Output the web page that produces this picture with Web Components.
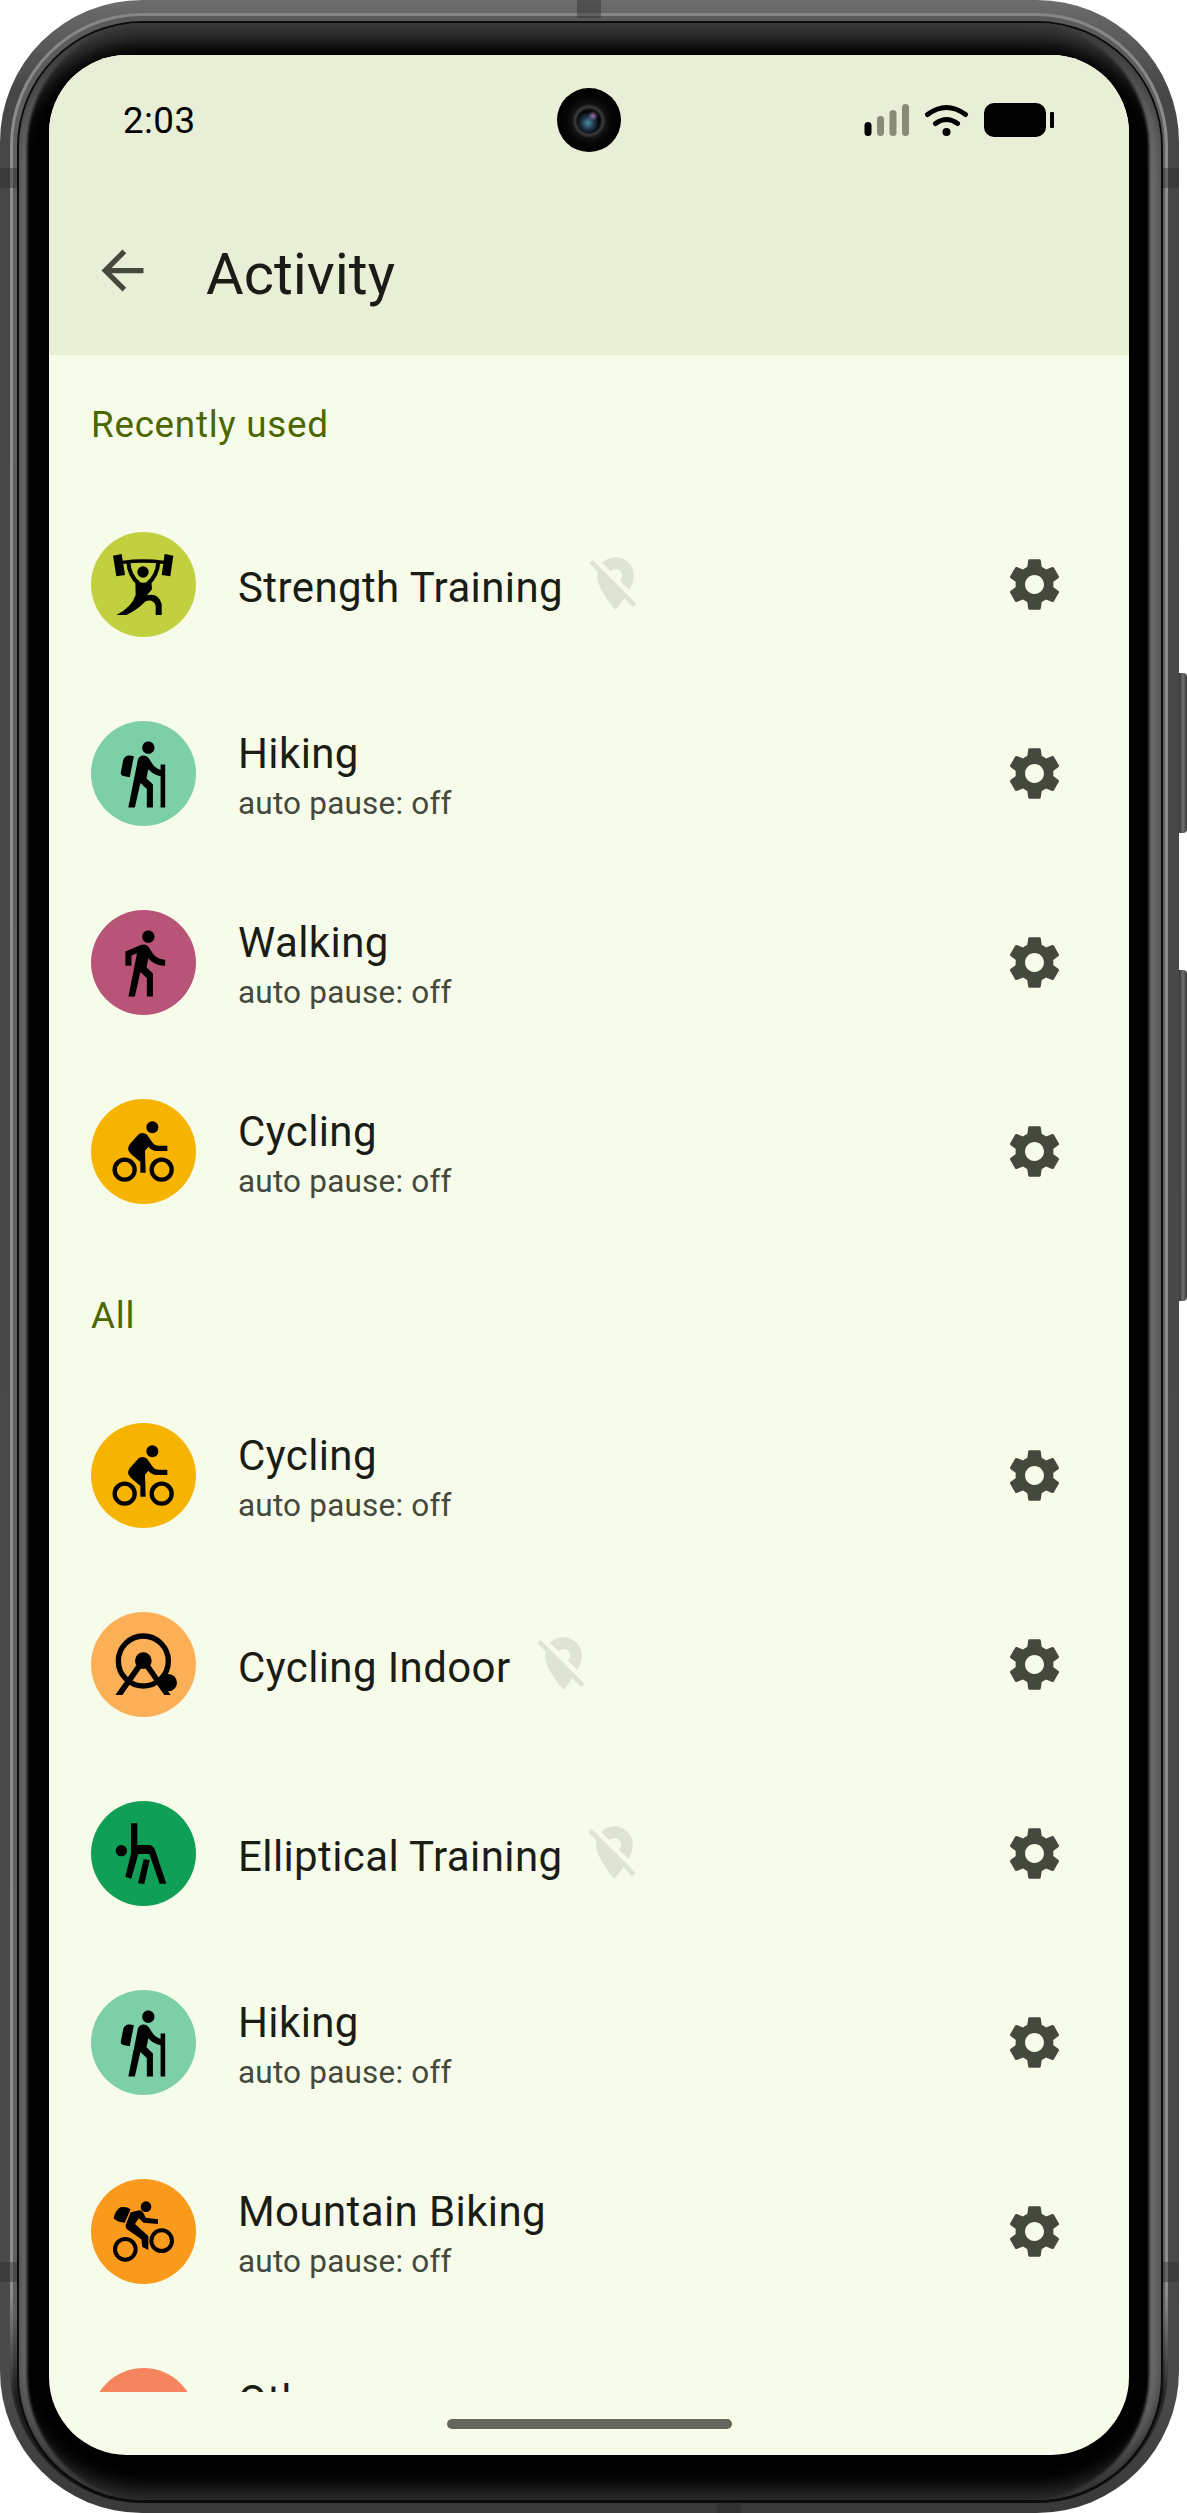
<!DOCTYPE html>
<html>
<head>
<meta charset="utf-8">
<title>Activity</title>
<style>
  html, body { margin: 0; padding: 0; background: #fff; }
  body { font-family: Roboto, "Liberation Sans", sans-serif; }
</style>
</head>
<body>
<phone-frame>
  <status-bar>2:03</status-bar>
  <app-bar>Activity</app-bar>
  <activity-list>
    <section-label>Recently used</section-label>
    <activity-row icon="strength" color="#c2cf3e" nopause>Strength Training</activity-row>
    <activity-row icon="hike" color="#7dcfa8">Hiking<span slot="sub">auto pause: off</span></activity-row>
    <activity-row icon="walk" color="#b85478">Walking<span slot="sub">auto pause: off</span></activity-row>
    <activity-row icon="bike" color="#f6b400">Cycling<span slot="sub">auto pause: off</span></activity-row>
    <section-label>All</section-label>
    <activity-row icon="bike" color="#f6b400">Cycling<span slot="sub">auto pause: off</span></activity-row>
    <activity-row icon="indoor" color="#fbb057" nopause>Cycling Indoor</activity-row>
    <activity-row icon="elliptical" color="#109f57" nopause>Elliptical Training</activity-row>
    <activity-row icon="hike" color="#7dcfa8">Hiking<span slot="sub">auto pause: off</span></activity-row>
    <activity-row icon="mtb" color="#f99a1c">Mountain Biking<span slot="sub">auto pause: off</span></activity-row>
    <activity-row icon="other" color="#f5845f">Other<span slot="sub">&nbsp;</span></activity-row>
  </activity-list>
  <nav-pill></nav-pill>
</phone-frame>

<script>
// material paths are on a 24 unit grid, the others are traced from a 3x crop of the 105px circle
const GEAR = 'M19.14 12.94c.04-.3.06-.61.06-.94 0-.32-.02-.64-.07-.94l2.03-1.58c.18-.14.23-.41.12-.61l-1.92-3.32c-.12-.22-.37-.29-.59-.22l-2.39.96c-.5-.38-1.03-.7-1.62-.94l-.36-2.54c-.04-.24-.24-.41-.48-.41h-3.84c-.24 0-.43.17-.47.41l-.36 2.54c-.59.24-1.13.57-1.62.94l-2.39-.96c-.22-.08-.47 0-.59.22L2.74 8.87c-.12.21-.08.47.12.61l2.03 1.58c-.05.3-.09.63-.09.94s.02.64.07.94l-2.03 1.58c-.18.14-.23.41-.12.61l1.92 3.32c.12.22.37.29.59.22l2.39-.96c.5.38 1.03.7 1.62.94l.36 2.54c.05.24.24.41.48.41h3.84c.24 0 .44-.17.47-.41l.36-2.54c.59-.24 1.13-.56 1.62-.94l2.39.96c.22.08.47 0 .59-.22l1.92-3.32c.12-.22.07-.47-.12-.61l-2.01-1.58zM12 15.6c-1.98 0-3.6-1.62-3.6-3.6s1.62-3.6 3.6-3.6 3.6 1.62 3.6 3.6-1.62 3.6-3.6 3.6z';
const PIN_OFF = 'M12 6.5c1.38 0 2.5 1.12 2.5 2.5 0 .74-.33 1.39-.83 1.85l3.63 3.63c.98-1.86 1.7-3.8 1.7-5.48 0-3.87-3.13-7-7-7-1.98 0-3.76.83-5.04 2.15l3.19 3.19c.46-.52 1.11-.84 1.85-.84zm4.37 9.6l-4.63-4.63-.11-.11L3.27 3 2 4.27l3.18 3.18C5.07 7.95 5 8.47 5 9c0 5.25 7 13 7 13s1.67-1.85 3.38-4.35L18.73 21 20 19.73l-3.63-3.63z';

const ICONS = {
  hike: { grid: true, body: '<path d="M13.5 5.5c1.1 0 2-.9 2-2s-.9-2-2-2-2 .9-2 2 .9 2 2 2zM17.5 10.78c-1.23-.37-2.22-1.17-2.8-2.18l-1-1.6c-.41-.65-1.11-1-1.84-1-.78 0-1.59.5-1.78 1.44S7 23 7 23h2.1l1.8-8 2.1 2v6h2v-7.5l-2.1-2 .6-3c1 1.15 2.41 2.01 4 2.34V23H19V9h-1.5v1.78zM7.43 13.13l-2.12-.41c-.54-.11-.9-.63-.79-1.17l.76-3.93c.21-1.08 1.26-1.79 2.34-1.58l1.16.23-1.35 6.86z"/>' },
  walk: { grid: true, body: '<path d="M13.5 5.5c1.1 0 2-.9 2-2s-.9-2-2-2-2 .9-2 2 .9 2 2 2zM9.8 8.9L7 23h2.1l1.8-8 2.1 2v6h2v-7.5l-2.1-2 .6-3C14.8 12 16.8 13 19 13v-2c-1.9 0-3.5-1-4.3-2.4l-1-1.6c-.4-.6-1-1-1.7-1-.3 0-.5.1-.8.1L6 8.3V13h2V9.6l1.8-.7"/>' },
  strength: { y: 66, body: `
    <path d="M130 137L156 132L166 195L140 199ZM285 132L311 137L302 199L276 195Z"/>
    <path d="M158 157Q220 149 283 157" fill="none" stroke="#000" stroke-width="10"/>
    <path d="M176 156C178 185 188 205 207 220M266 156C264 185 254 205 235 220" fill="none" stroke="#000" stroke-width="12"/>
    <circle cx="220" cy="186" r="17"/>
    <path d="M197 213Q221 224 245 213L247 238L232 256Q266 248 276 282L276 315L258 315L258 287Q250 266 228 274Q200 302 170 315L140 315Q186 292 198 255Z"/>` },
  bike: { y: 657, body: `
    <circle cx="248" cy="742" r="18"/>
    <path d="M175 805Q176 795 184 788L207 763Q220 755 232 764L250 790Q255 797 266 797L293 797V813L262 813Q245 812 236 800L226 812L228 878H212V846L184 822Q175 815 175 805Z"/>
    <circle cx="165" cy="869" r="30" fill="none" stroke="#000" stroke-width="13"/>
    <circle cx="276" cy="869" r="30" fill="none" stroke="#000" stroke-width="13"/>` },
  indoor: { y: 66, body: `
    <circle cx="221" cy="213" r="75" fill="none" stroke="#000" stroke-width="16"/>
    <circle cx="221" cy="212" r="25"/>
    <circle cx="296" cy="278" r="26"/>
    <path d="M213 207L137 315H158L221 226L284 315H303L229 207Z"/>` },
  elliptical: { y: 633, body: `
    <circle cx="155" cy="782" r="17"/>
    <path d="M184 700H203V765H236Q252 765 257 782L290 881H270L239 792H206L185 866L167 860L184 790Z"/>
    <path d="M222 808L240 810L224 882L205 880Z"/>` },
  mtb: { y: 87, body: `
    <circle cx="229" cy="170" r="16"/>
    <path d="M132 205Q136 182 152 172Q170 168 183 178L165 218Q145 218 132 205Z"/>
    <path d="M183 187L210 181Q220 182 228 203L265 208V222L222 218L207 205L196 222L236 258V300L218 291L215 268L172 238Q165 230 170 220Z"/>
    <circle cx="167" cy="298" r="31" fill="none" stroke="#000" stroke-width="12"/>
    <circle cx="276" cy="272" r="31" fill="none" stroke="#000" stroke-width="12"/>` },
  other: { grid: true, body: '<circle cx="12" cy="7" r="3"/>' }
};

class PhoneFrame extends HTMLElement {
  constructor() {
    super();
    this.shadowDOM = this.attachShadow({ mode: 'open' });
    this.shadowDOM.innerHTML = `
      <style>
        :host { display: block; position: relative; width: 1187px; height: 2513px; }
        .band { box-sizing: border-box; height: 100%; }
        .b1 { width: 1179px; border-radius: 142px; padding: 13px 11px 10px 10px;
              background: linear-gradient(#6e6e6e, #666 13px, #474747 90px, #4a4a4a 2400px, #3a3a3a 2500px); }
        .b2 { border-radius: 132px; padding: 3px 3px 0 3px; background: #8c8c8c; background: linear-gradient(#868686, #8c8c8c 100px, #8c8c8c 2280px, #2a2a2a 2380px); }
        .b3 { border-radius: 129px; padding: 5px 2px 0 4px; background: linear-gradient(#5a5a5a, #5f5f5f 100px, #5f5f5f 2300px, #1c1c1c 2380px); }
        .b4 { border-radius: 126px; padding: 2px 2px 3px 2px; background: #0c0c0c; }
        .b5 { border-radius: 124px; padding: 32px 19px 45px 30px; margin: 0; background: #000;
              box-shadow: inset 0 26px 20px -8px #3a3a3a, inset 0 -18px 18px -6px #2c2c2c,
                          inset 9px 0 3px -1px #707070, inset -13px 0 3px -1px #6e6e6e; }
        .screen { display: flex; flex-direction: column; width: 1080px; height: 2400px; overflow: hidden;
                  border-radius: 78px; background: #f7fcea; }
        .btn { position: absolute; left: 1179px; width: 8px; border-radius: 0 4px 4px 0; background: linear-gradient(90deg, #333, #6e6e6e 50%, #3a3a3a); }
        .mark { position: absolute; background: rgba(40,40,40,.4); }
      </style>
      <div class="band b1"><div class="band b2"><div class="band b3"><div class="band b4"><div class="band b5">
        <div class="screen"><slot></slot></div>
      </div></div></div></div></div>
      <div class="btn" style="top:673px;height:160px"></div>
      <div class="btn" style="top:970px;height:331px"></div>
      <div class="mark" style="left:577px;top:0;width:24px;height:18px"></div>
      <div class="mark" style="left:0;top:168px;width:17px;height:20px"></div>
      <div class="mark" style="left:1163px;top:168px;width:16px;height:20px"></div>
      <div class="mark" style="left:0;top:2262px;width:17px;height:20px"></div>
      <div class="mark" style="left:1163px;top:2262px;width:16px;height:20px"></div>
      <div class="mark" style="left:717px;top:2503px;width:24px;height:10px"></div>
    `;
  }
}

class StatusBar extends HTMLElement {
  constructor() {
    super();
    this.shadowDOM = this.attachShadow({ mode: 'open' });
    this.shadowDOM.innerHTML = `
      <style>
        :host { display: flex; flex: none; position: relative; box-sizing: border-box; height: 131px;
                align-items: center; justify-content: space-between; padding: 0 75px 0 74px;
                background: #e9eed7; color: #000; font-size: 36.75px; letter-spacing: .4px; }
        .camera { position: absolute; left: 508px; top: 33px; width: 64px; height: 64px; border-radius: 50%;
                  background:
                    radial-gradient(circle at 36px 28px, rgba(175,130,195,.85) 0, rgba(175,130,195,0) 5px),
                    radial-gradient(circle at 31px 35px, #4f8fa5 0, #1c3a4c 6px, rgba(20,30,40,0) 11px),
                    radial-gradient(circle at 32px 33px, #08080c 0, #08080c 11px, #3c3c3c 14px, #121212 17px, #060606 23px, #000 32px); }
        svg { display: block; position: relative; top: -1px; }
      </style>
      <span><slot></slot></span>
      <div class="camera"></div>
      <svg width="190" height="34" viewBox="864 104 190 34">
        <rect x="864.5" y="123" width="7" height="14" rx="3.5"/>
        <rect x="877" y="117" width="7" height="20" rx="3.5" fill="#888b78"/>
        <rect x="889.5" y="111" width="7" height="26" rx="3.5" fill="#888b78"/>
        <rect x="902" y="105" width="7" height="32" rx="3.5" fill="#888b78"/>
        <path d="M927.5 115.500Q946.500 101.500 965.500 115.500M935.500 124.500Q946.500 116.500 957.500 124.500" fill="none" stroke="#000" stroke-width="5" stroke-linecap="round"/>
        <circle cx="946.500" cy="133" r="4"/>
        <rect x="984" y="104" width="62" height="34" rx="10"/>
        <rect x="1050" y="113" width="4" height="16" rx="1"/>
      </svg>
    `;
  }
}

class AppBar extends HTMLElement {
  constructor() {
    super();
    this.shadowDOM = this.attachShadow({ mode: 'open' });
    this.shadowDOM.innerHTML = `
      <style>
        :host { display: flex; flex: none; box-sizing: border-box; height: 169px; align-items: center;
                padding-left: 42px; background: #e9eed7; color: #1a1c16; font-size: 57.75px; }
        svg { display: block; flex: none; width: 63px; height: 63px; margin-right: 52px; fill: #45483c; }
        span { padding-top: 6px; }
      </style>
      <svg viewBox="0 0 24 24"><path d="M20 11H7.830l5.590-5.590L12 4l-8 8 8 8 1.410-1.410L7.830 13H20v-2z"/></svg>
      <span><slot></slot></span>
    `;
  }
}

class ActivityList extends HTMLElement {
  constructor() {
    super();
    this.shadowDOM = this.attachShadow({ mode: 'open' });
    this.shadowDOM.innerHTML = `
      <style>
        :host { display: block; flex: 1; min-height: 0; overflow: hidden; }
      </style>
      <slot></slot>
    `;
  }
}

class SectionLabel extends HTMLElement {
  constructor() {
    super();
    this.shadowDOM = this.attachShadow({ mode: 'open' });
    this.shadowDOM.innerHTML = `
      <style>
        :host { display: block; box-sizing: border-box; height: 135px; padding: 49px 42px 0;
                color: #4c6700; font-size: 36.75px; line-height: 42px; letter-spacing: .75px; }
      </style>
      <slot></slot>
    `;
  }
}

class ActivityRow extends HTMLElement {
  constructor() {
    super();
    this.shadowDOM = this.attachShadow({ mode: 'open' });
  }

  connectedCallback() {
    this.render();
  }

  render() {
    const icon = ICONS[this.getAttribute('icon')];
    const color = this.getAttribute('color');
    const glyph = icon.grid
      ? `<svg class="glyph" viewBox="0 0 24 24">${icon.body}</svg>`
      : `<svg class="disc" viewBox="64 ${icon.y} 315 315">${icon.body}</svg>`;
    const pin = this.hasAttribute('nopause')
      ? `<svg class="pin" viewBox="0 0 24 24"><path d="${PIN_OFF}"/></svg>`
      : '';
    const nudge = this.hasAttribute('nopause') ? 3 : 0.5;
    this.shadowDOM.innerHTML = `
      <style>
        :host { display: flex; box-sizing: border-box; height: 189px; align-items: center;
                padding: 0 63px 0 42px; }
        .circle { display: flex; flex: none; width: 105px; height: 105px; border-radius: 50%;
                  align-items: center; justify-content: center; background: ${color}; }
        .glyph { display: block; width: 73.5px; height: 73.5px; }
        .disc { display: block; width: 105px; height: 105px; }
        .text { display: flex; flex: 1; flex-direction: column; margin-left: 42px; min-width: 0; }
        .title { display: flex; align-items: center; color: #1a1c16; font-size: 42px; line-height: 56px; letter-spacing: .4px; }
        .label { position: relative; top: ${nudge}px; }
        .sub { position: relative; top: 1.5px; color: #44483d; font-size: 31.5px; line-height: 41px; letter-spacing: .2px; }
        .pin { display: block; flex: none; position: relative; top: -1px; width: 63px; height: 63px; margin-left: 21px; fill: #dfe3d3; }
        .gear { display: block; flex: none; width: 63px; height: 63px; fill: #45483c; }
      </style>
      <div class="circle">${glyph}</div>
      <div class="text">
        <div class="title"><span class="label"><slot></slot></span>${pin}</div>
        <div class="sub"><slot name="sub"></slot></div>
      </div>
      <svg class="gear" viewBox="0 0 24 24"><path d="${GEAR}"/></svg>
    `;
    if (!this.querySelector('[slot=sub]')) this.shadowDOM.querySelector('.sub').remove();
  }
}

class NavPill extends HTMLElement {
  constructor() {
    super();
    this.shadowDOM = this.attachShadow({ mode: 'open' });
    this.shadowDOM.innerHTML = `
      <style>
        :host { display: flex; flex: none; box-sizing: border-box; height: 63px; padding-top: 27px; justify-content: center; }
        div { width: 285px; height: 10px; border-radius: 5px; background: #64665e; }
      </style>
      <div></div>
    `;
  }
}

customElements.define('phone-frame', PhoneFrame);
customElements.define('status-bar', StatusBar);
customElements.define('app-bar', AppBar);
customElements.define('activity-list', ActivityList);
customElements.define('section-label', SectionLabel);
customElements.define('activity-row', ActivityRow);
customElements.define('nav-pill', NavPill);
</script>
</body>
</html>
